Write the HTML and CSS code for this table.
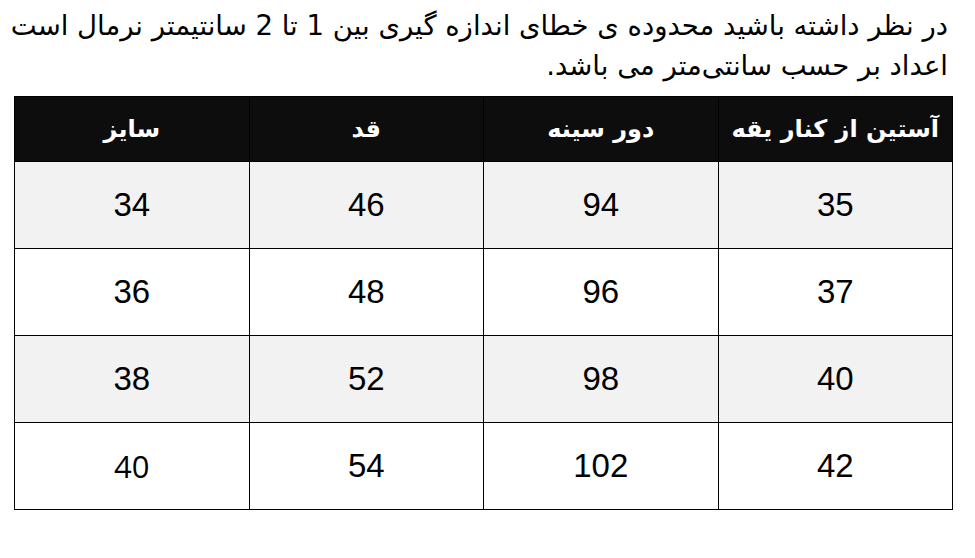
FILE: index.html
```html
<!DOCTYPE html>
<html lang="fa" dir="rtl">
<head>
<meta charset="utf-8">
<link rel="stylesheet" href="styles.css">
</head>
<body>
<div class="page">
  <p class="note">در نظر داشته باشید محدوده ی خطای اندازه گیری بین 1 تا 2 سانتیمتر نرمال است<br>اعداد بر حسب سانتی‌متر می باشد.</p>
  <table class="sizes">
    <thead>
      <tr><th>آستین از کنار یقه</th><th>دور سینه</th><th>قد</th><th>سایز</th></tr>
    </thead>
    <tbody>
      <tr class="shade"><td>35</td><td>94</td><td>46</td><td>34</td></tr>
      <tr><td>37</td><td>96</td><td>48</td><td>36</td></tr>
      <tr class="shade"><td>40</td><td>98</td><td>52</td><td>38</td></tr>
      <tr><td>42</td><td>102</td><td>54</td><td class="alt">40</td></tr>
    </tbody>
  </table>
</div>
</body>
</html>
```
FILE: styles.css
```css
html, body {
  margin: 0;
  padding: 0;
  background: #ffffff;
}
.page {
  width: 975px;
  height: 558px;
  padding: 0 22px 0 14px;
  box-sizing: border-box;
}
.note {
  margin: 0 5px 0 0;
  padding-top: 5px;
  font-family: "DejaVu Sans", sans-serif;
  font-size: 27.5px;
  line-height: 40px;
  color: #000;
  text-align: right;
  height: 91px;
  white-space: nowrap;
}
.sizes {
  direction: rtl;
  width: 939px;
  border-collapse: collapse;
  table-layout: fixed;
}
.sizes th, .sizes td {
  border: 1.5px solid #000;
  text-align: center;
  vertical-align: middle;
  padding: 0;
}
.sizes th {
  background: #0d0d0d;
  color: #fff;
  height: 64px;
  font-family: "DejaVu Sans", sans-serif;
  font-weight: bold;
  font-size: 24px;
}
.sizes td {
  height: 86px;
  font-family: "Liberation Sans", Arial, sans-serif;
  font-size: 33px;
  color: #000;
}
.sizes tr.shade td {
  background: #f2f2f2;
}
.sizes td.alt {
  font-family: "Open Sans", sans-serif;
  font-size: 31px;
}
```
